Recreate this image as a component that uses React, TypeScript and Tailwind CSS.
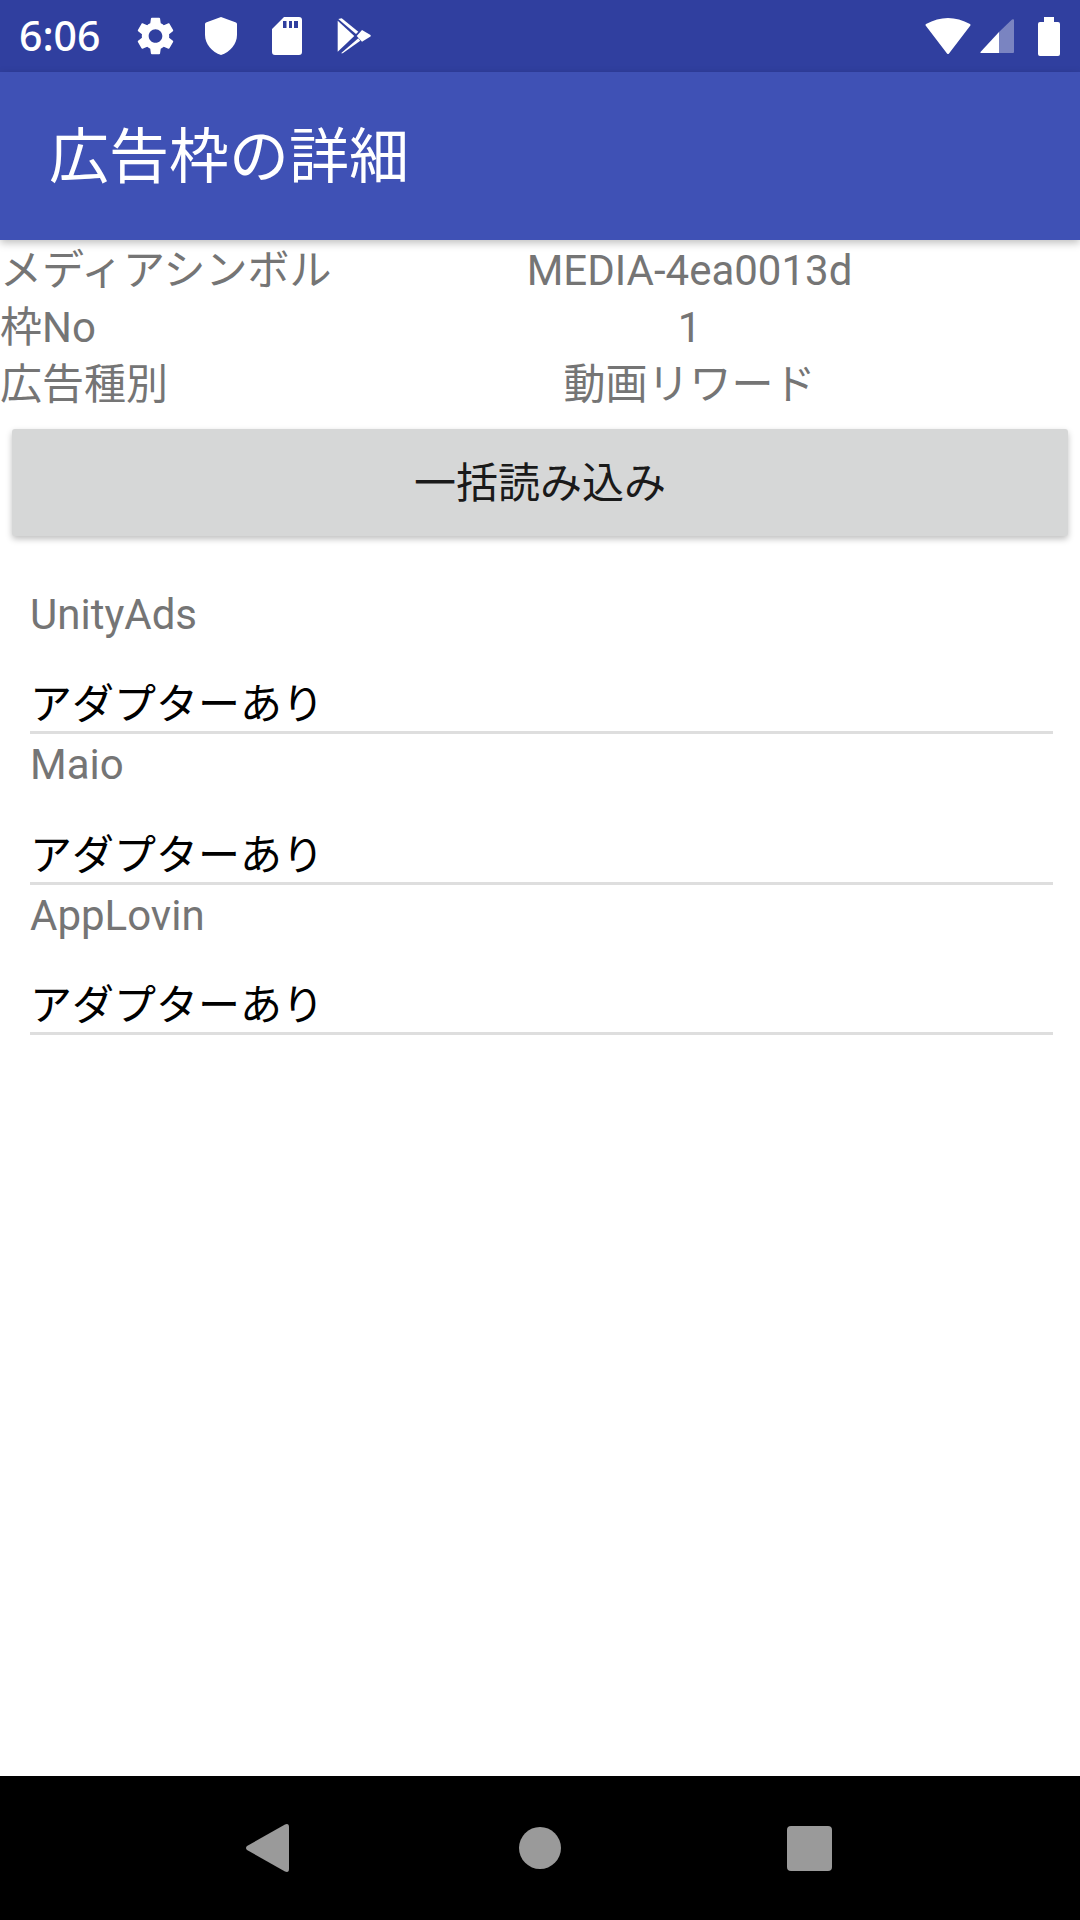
const font = { fontFamily: '"Roboto", "Noto Sans CJK JP", sans-serif' };

function StatusBar() {
  return (
    <div className="h-[72px] bg-[#303F9F] flex items-center text-white">
      <span className="ml-[19px] w-[118px] text-[41px] font-medium font-['Noto_Sans','Noto_Sans_CJK_JP',sans-serif]">6:06</span>
      {/* gear */}
      <svg viewBox="2.5 2 19 20" className="w-[37px] h-[38px] fill-white">
        <path d="M19.14 12.94c.04-.3.06-.61.06-.94 0-.32-.02-.64-.07-.94l2.03-1.58c.18-.14.23-.41.12-.61l-1.92-3.32c-.12-.22-.37-.29-.59-.22l-2.39.96c-.5-.38-1.03-.7-1.62-.94l-.36-2.54c-.04-.24-.24-.41-.48-.41h-3.84c-.24 0-.43.17-.47.41l-.36 2.54c-.59.24-1.13.57-1.62.94l-2.39-.96c-.22-.08-.47 0-.59.22L2.74 8.87c-.12.21-.08.47.12.61l2.03 1.58c-.05.3-.09.63-.09.94s.02.64.07.94l-2.03 1.58c-.18.14-.23.41-.12.61l1.92 3.32c.12.22.37.29.59.22l2.39-.96c.5.38 1.03.7 1.62.94l.36 2.54c.05.24.24.41.48.41h3.84c.24 0 .44-.17.47-.41l.36-2.54c.59-.24 1.13-.56 1.62-.94l2.39.96c.22.08.47 0 .59-.22l1.92-3.32c.12-.22.07-.47-.12-.61l-2.01-1.58zM12 15.6c-1.98 0-3.6-1.62-3.6-3.6s1.62-3.6 3.6-3.6 3.6 1.62 3.6 3.6-1.62 3.6-3.6 3.6z" />
      </svg>
      {/* shield */}
      <svg viewBox="0 0 32 38" className="ml-[31px] w-[32px] h-[38px] fill-white">
        <path d="M16 0 L31 5.5 Q32 6 32 7 V18 C32 27 25 35 16 38 C7 35 0 27 0 18 V7 Q0 6 1 5.5 Z" />
      </svg>
      {/* sd card */}
      <svg viewBox="0 0 30 38" className="ml-[35px] w-[30px] h-[38px] fill-white">
        <path fillRule="evenodd" d="M12 0 H27 Q30 0 30 3 V35 Q30 38 27 38 H3 Q0 38 0 35 V12 Z M11 4 V11 H14.5 V4 Z M17 4 V11 H20 V4 Z M22 4 V11 H26 V4 Z" />
      </svg>
      {/* play store */}
      <svg viewBox="0 0 34 36" className="ml-[35px] w-[34px] h-[36px] fill-white">
        <path d="M0.7 2.7 L17.3 18 L0.7 33.7 Z" />
        <path d="M1.3 1 L4.7 0.3 L21.3 13.7 L19 16 Z" />
        <path d="M4 35.3 L21.3 20.3 L23.3 22.7 L5.7 35.3 Z" />
        <path d="M25 12 L33.5 17 Q34 17.7 33.5 18.4 L25 23.7 L19.7 18 Z" />
      </svg>
      <div className="flex-1" />
      {/* wifi */}
      <svg viewBox="0 0 46 36" className="w-[46px] h-[36px] fill-white">
        <path d="M1 8 Q0 7 1 6 Q23 -6 45 6 Q46 7 45 8 L24 35.5 Q23 36.5 22 35.5 Z" />
      </svg>
      {/* signal */}
      <svg viewBox="0 0 34 34" className="ml-[9px] w-[34px] h-[34px] fill-white">
        <path d="M34 1 V33 Q34 34 33 34 H19 V13 L32 0.5 Q34 0 34 1 Z" fillOpacity="0.36" />
        <path d="M19 13 V34 H1 Q0 34 0.5 33 Z" />
      </svg>
      {/* battery */}
      <svg viewBox="0 0 22 39" className="ml-[24px] mr-[20px] w-[22px] h-[39px] fill-white">
        <path d="M6 0 H16 V5 H20 Q22 5 22 7 V37 Q22 39 20 39 H2 Q0 39 0 37 V7 Q0 5 2 5 H6 Z" />
      </svg>
    </div>
  );
}

function InfoRow({ label, value }: { label: string; value: string }) {
  return (
    <div className="h-[57px] flex items-center text-[42px] text-[#757575] leading-none whitespace-nowrap">
      <span className="w-[299px]">{label}</span>
      <span className="flex-1 text-center">{value}</span>
    </div>
  );
}

function AdapterField({ name }: { name: string }) {
  return (
    <div className="ml-[30px] mr-[27px] h-[150.5px] flex flex-col">
      <div className="text-[#757575] text-[42px] leading-none">{name}</div>
      <div className="flex-1" />
      <div className="text-black text-[42px] leading-none pb-[5px]">アダプターあり</div>
      <div className="h-[3px] bg-[#DEDEDE] mb-[10px]" />
    </div>
  );
}

export default function App() {
  return (
    <div className="w-[1080px] h-[1920px] flex flex-col bg-white overflow-hidden" style={font}>
      <StatusBar />
      <div className="h-[168px] bg-[#3F51B5] flex items-center pl-[49px] pt-[4px] shadow-[0_3px_8px_rgba(0,0,0,0.25)] relative">
        <h1 className="text-[60px] text-white leading-none font-normal">広告枠の詳細</h1>
      </div>
      <div className="pt-[2px]">
        <InfoRow label="メディアシンボル" value="MEDIA-4ea0013d" />
        <InfoRow label="枠No" value="1" />
        <InfoRow label="広告種別" value="動画リワード" />
      </div>
      <button className="mx-[12px] mt-[16px] h-[107px] pt-[2px] bg-[#D6D7D7] rounded-[3px] text-[42px] text-[#1a1a1a] shadow-[0_3px_6px_rgba(0,0,0,0.25)]">
        一括読み込み
      </button>
      <div className="mt-[57.5px]">
        <AdapterField name="UnityAds" />
        <AdapterField name="Maio" />
        <AdapterField name="AppLovin" />
      </div>
      <div className="flex-1" />
      {/* nav bar */}
      <div className="h-[144px] bg-black flex items-center justify-center pr-[2px]">
        <svg viewBox="0 0 43 48" className="w-[43px] h-[48px] fill-[#9A9A9A]">
          <path d="M39 0.5 Q43 -1 43 3 V45 Q43 49 39 47.5 L1 26 Q-1 24 1 22 Z" />
        </svg>
        <div className="ml-[230px] w-[42px] h-[42px] rounded-full bg-[#9A9A9A]" />
        <div className="ml-[226px] w-[45px] h-[45px] rounded-[4px] bg-[#9A9A9A]" />
      </div>
    </div>
  );
}
